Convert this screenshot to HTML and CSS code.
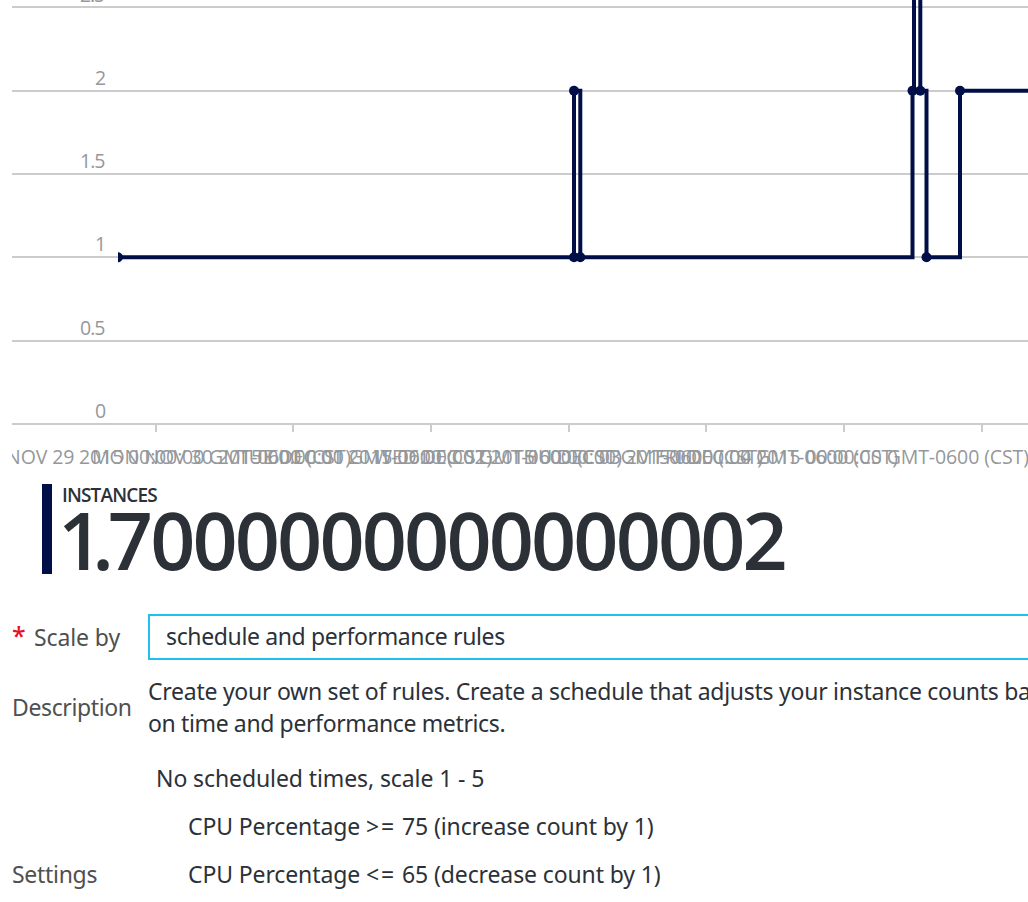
FILE: index.html
```
<!DOCTYPE html>
<html lang="en">
<head>
<meta charset="utf-8">
<title>Scale settings</title>
<link rel="stylesheet" href="styles.css">
</head>
<body>
<main class="panel">
<svg class="chart" width="1016" height="476" viewBox="12 0 1016 476" role="img" aria-label="Instance count">
  <path class="grid" d="M12 7H1028M12 91H1028M12 174H1028M12 257H1028M12 341H1028M12 424H1028M156 424V432M293 424V432M431 424V432M569 424V432M706 424V432M844 424V432M982 424V432"/>
  <g class="y-labels">
    <text x="80" y="1.5" textLength="25">2.5</text>
    <text x="95" y="85" textLength="10.5">2</text>
    <text x="80" y="168" textLength="25.5">1.5</text>
    <text x="95" y="251" textLength="10.5">1</text>
    <text x="80" y="335" textLength="25.5">0.5</text>
    <text x="95" y="418" textLength="10.5">0</text>
  </g>
  <g class="x-labels">
    <text x="-38" y="464" textLength="389">SUN NOV 29 2015 00:00:00 GMT-0600 (CST)</text>
    <text x="92" y="464" textLength="400">MON NOV 30 2015 00:00:00 GMT-0600 (CST)</text>
    <text x="238" y="464" textLength="384">TUE DEC 01 2015 00:00:00 GMT-0600 (CST)</text>
    <text x="374" y="464" textLength="389">WED DEC 02 2015 00:00:00 GMT-0600 (CST)</text>
    <text x="513" y="464" textLength="385">THU DEC 03 2015 00:00:00 GMT-0600 (CST)</text>
    <text x="655" y="464" textLength="374">FRI DEC 04 2015 00:00:00 GMT-0600 (CST)</text>
  </g>
  <path class="series" d="M118 257.3H574V90.7H580.3V257.3H912.5V90.7H914V-4H920.3V90.7H926.5V257.3H960V90.7H1030"/>
  <g class="points">
    <path d="M118 252.3C121 252.3 123 255 123 257.3S121 262.3 118 262.3Z"/>
    <circle cx="574" cy="90.7" r="5"/><circle cx="574" cy="257.3" r="5"/><circle cx="580.3" cy="257.3" r="5"/>
    <circle cx="912.5" cy="90.7" r="5"/><circle cx="920.3" cy="90.7" r="5"/><circle cx="926.5" cy="257.3" r="5"/><circle cx="960" cy="90.7" r="5"/>
  </g>
</svg>
<section class="metric">
  <div class="metric-name">INSTANCES</div>
  <div class="metric-value"><span class="lead">1</span><span class="dot">.</span>7000000000000002</div>
</section>
<section class="form">
  <div class="row scale-row">
    <div class="label"><span class="required">*</span><span class="t-scale">Scale by</span></div>
    <div class="select"><span class="t-select">schedule and performance rules</span></div>
  </div>
  <div class="row description-row">
    <div class="label"><span class="t-desc">Description</span></div>
    <div class="description"><span class="t-d1">Create your own set of rules. Create a schedule that adjusts your instance counts based</span><br><span class="t-d2">on time and performance metrics.</span></div>
  </div>
  <div class="row settings-row">
    <div class="label"><span class="t-set">Settings</span></div>
    <div class="rules">
      <div class="schedule"><span class="t-no">No scheduled times, scale 1 - 5</span></div>
      <div class="rule"><span class="t-r1">CPU Percentage <span class="op">&gt;=</span> 75 (increase count by 1)</span></div>
      <div class="rule"><span class="t-r2">CPU Percentage <span class="op">&lt;=</span> 65 (decrease count by 1)</span></div>
    </div>
  </div>
</section>
</main>
</body>
</html>
```
FILE: styles.css
```
body { margin: 0; background: #fff; overflow: hidden; }
.panel { width: 1016px; height: 902px; padding-left: 12px; overflow: hidden; font-family: "Noto Sans", "Open Sans", sans-serif; font-size: 23px; font-weight: 380; line-height: 32px; color: #2c3138; white-space: nowrap; }
.chart { display: block; overflow: hidden; }
.grid { fill: none; stroke: #ccc; stroke-width: 2; }
.y-labels, .x-labels { fill: #95989b; font-family: "Open Sans", sans-serif; font-size: 19.5px; }
.series { fill: none; stroke: #000f47; stroke-width: 4; }
.points { fill: #000f47; }
.metric { box-sizing: border-box; height: 90px; margin: 8px 0 0 30px; border-left: 10px solid #000f47; padding-left: 10px; font-family: "Open Sans", sans-serif; font-weight: 600; }
.metric-name { height: 22px; font-size: 19px; line-height: 22px; letter-spacing: -0.85px; }
.metric-value { margin: -2px 0 0 -4px; font-size: 79px; line-height: 72px; letter-spacing: -2.85px; }
.lead { letter-spacing: -11px; }
.dot { letter-spacing: -6px; }
.form { margin-top: 40px; }
.scale-row { height: 46px; }
.row { display: grid; grid-template-columns: 136px 1fr; align-items: center; }
.label { color: #505050; display: flex; }
.required { width: 22px; color: #e81123; font-size: 25px; font-weight: 500; line-height: 28px; }
.select { box-sizing: border-box; height: 46px; margin-right: -4px; border: 2px solid #1fbfee; padding: 4px 16px 6px; }
.description-row { margin-top: 15px; }
.settings-row { margin-top: 15px; align-items: end; }
.settings-row .label, .schedule, .rule { height: 48px; line-height: 48px; }
.schedule { padding-left: 8px; }
.rule { padding-left: 40px; }
.t-select, .t-d2 { letter-spacing: -0.37px; }
.t-desc { letter-spacing: -0.38px; }
.t-d1 { letter-spacing: -0.26px; }
.t-no { letter-spacing: -0.1px; }
.t-set { letter-spacing: -0.29px; }
.t-scale { letter-spacing: -0.1px; }
.t-r1, .t-r2 { letter-spacing: -0.12px; }
.op { letter-spacing: 2px; }
```
